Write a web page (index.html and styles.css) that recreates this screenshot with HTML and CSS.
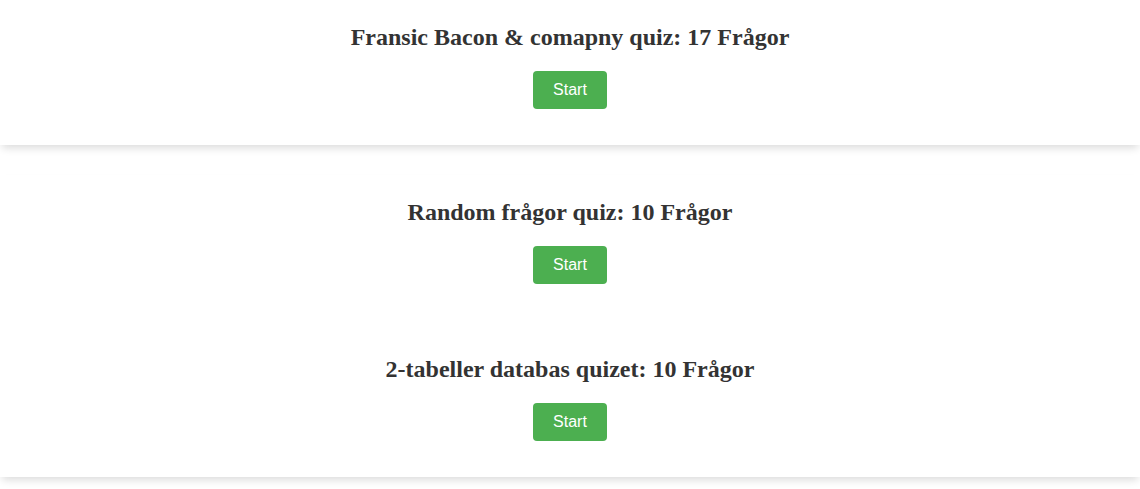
FILE: index.html
```html
<!DOCTYPE html>
<html lang="sv">
<head>
<meta charset="utf-8">
<title>Quiz</title>
<link rel="stylesheet" href="styles.css">
</head>
<body>
<section class="card">
  <div class="quiz">
    <h2 class="quiz-title">Fransic Bacon &amp; comapny quiz: 17 Frågor</h2>
    <button class="start-btn">Start</button>
  </div>
</section>
<section class="card card-second">
  <div class="quiz">
    <h2 class="quiz-title">Random frågor quiz: 10 Frågor</h2>
    <button class="start-btn">Start</button>
  </div>
  <div class="quiz">
    <h2 class="quiz-title">2-tabeller databas quizet: 10 Frågor</h2>
    <button class="start-btn">Start</button>
  </div>
</section>
</body>
</html>
```
FILE: styles.css
```css
html, body {
  margin: 0;
  padding: 0;
  background: #fff;
}
body {
  font-family: "Liberation Serif", "Times New Roman", serif;
  color: #333;
  padding-bottom: 20px;
}
.card {
  background: #fff;
  box-shadow: 0 5px 8px -2px rgba(0, 0, 0, 0.14);
  padding: 4px 0 36px;
}
.card-second {
  margin-top: 30px;
}
.quiz {
  text-align: center;
}
.quiz + .quiz {
  padding-top: 52px;
}
.quiz-title {
  font-size: 24px;
  font-weight: bold;
  margin: 20px 0;
  color: #333;
}
.start-btn {
  font-family: "Liberation Sans", Arial, sans-serif;
  font-size: 16px;
  line-height: normal;
  color: #fff;
  background: #4CAF50;
  border: none;
  border-radius: 4px;
  padding: 10px 20px;
  cursor: pointer;
}
```
